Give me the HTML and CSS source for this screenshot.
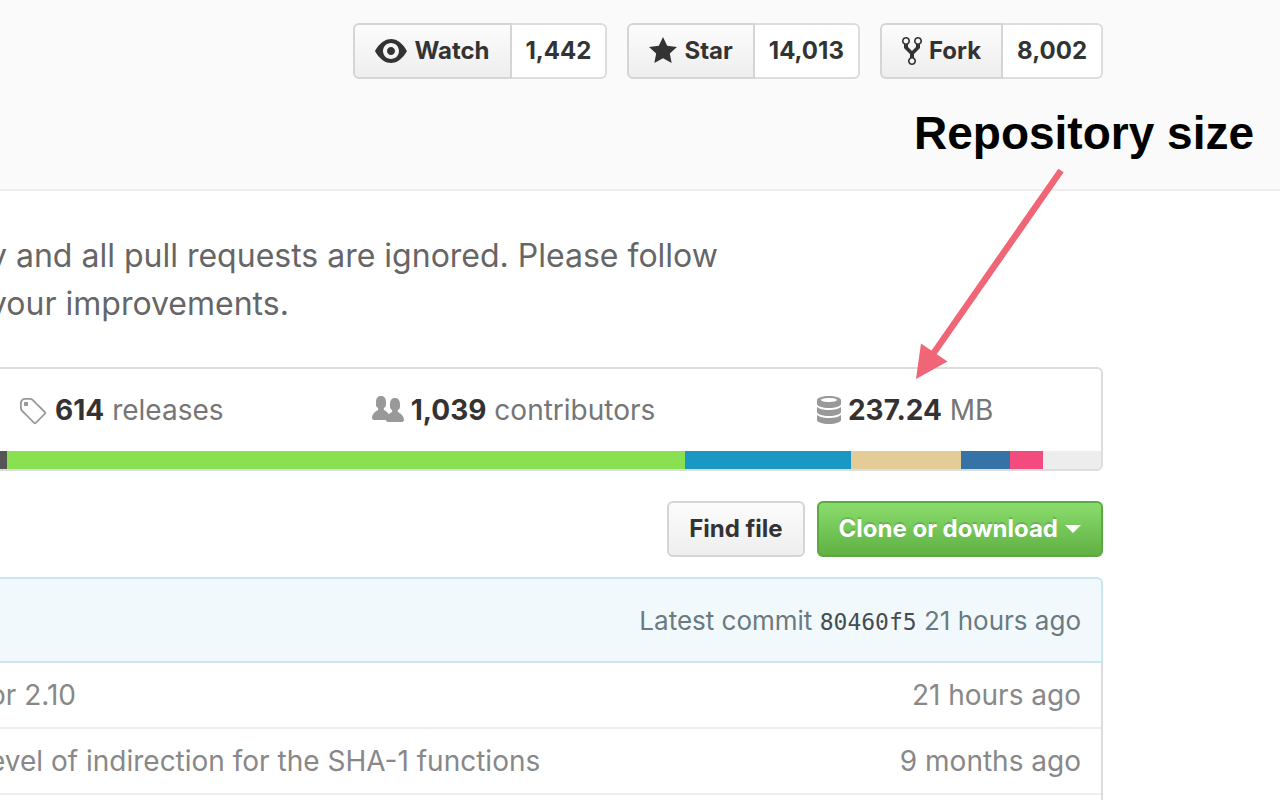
FILE: index.html
```html
<!DOCTYPE html>
<html lang="en">
<head>
    <meta charset="UTF-8">
    <meta name="viewport" content="width=device-width, initial-scale=1.0">
    <title>Repository size</title>
    <link rel="stylesheet" href="styles.css">
</head>
<body>
    <header class="repohead">
        <ul class="pagehead-actions">
            <li>
                <button type="button" class="btn btn-with-count">
                    <svg class="icon" width="32" height="32" viewBox="0 0 16 16" aria-hidden="true"><path fill-rule="evenodd" d="M8.06 2C3 2 0 8 0 8s3 6 8.06 6C13 14 16 8 16 8s-3-6-7.94-6zM8 12c-2.2 0-4-1.78-4-4 0-2.2 1.8-4 4-4 2.22 0 4 1.8 4 4 0 2.22-1.78 4-4 4zm2-4c0 1.11-.89 2-2 2-1.11 0-2-.89-2-2 0-1.11.89-2 2-2 1.11 0 2 .89 2 2z"/></svg>
                    Watch
                </button>
                <a class="social-count" href="#">1,442</a>
            </li>
            <li>
                <button type="button" class="btn btn-with-count">
                    <svg class="icon" width="28" height="32" viewBox="0 0 14 16" aria-hidden="true"><path d="M14 6l-4.9-.64L7 1 4.9 5.36 0 6l3.6 3.26L2.67 14 7 11.67 11.33 14l-.93-4.74z"/></svg>
                    Star
                </button>
                <a class="social-count" href="#">14,013</a>
            </li>
            <li>
                <button type="button" class="btn btn-with-count">
                    <svg class="icon" width="20" height="32" viewBox="0 0 10 16" aria-hidden="true"><path fill-rule="evenodd" d="M8 1a1.993 1.993 0 0 0-1 3.72V6L5 8 3 6V4.72A1.993 1.993 0 0 0 2 1a1.993 1.993 0 0 0-1 3.72V6.5l3 3v1.78A1.993 1.993 0 0 0 5 15a1.993 1.993 0 0 0 1-3.72V9.5l3-3V4.72A1.993 1.993 0 0 0 8 1zM2 4.2C1.34 4.2.8 3.65.8 3c0-.65.55-1.2 1.2-1.2.65 0 1.2.55 1.2 1.2 0 .65-.55 1.2-1.2 1.2zm3 10c-.66 0-1.2-.55-1.2-1.2 0-.65.55-1.2 1.2-1.2.65 0 1.2.55 1.2 1.2 0 .65-.55 1.2-1.2 1.2zm3-10c-.66 0-1.2-.55-1.2-1.2 0-.65.55-1.2 1.2-1.2.65 0 1.2.55 1.2 1.2 0 .65-.55 1.2-1.2 1.2z"/></svg>
                    Fork
                </button>
                <a class="social-count" href="#">8,002</a>
            </li>
        </ul>
    </header>

    <main class="repo">
        <p class="repo-description">y and all pull requests are ignored. Please follow<br>your improvements.</p>

        <section class="overall-summary">
            <ul class="numbers-summary">
                <li>
                    <a href="#">
                        <svg class="icon" width="28" height="32" viewBox="0 0 14 16" aria-hidden="true"><path fill-rule="evenodd" d="M6.73 2.73C6.26 2.26 5.6 2 4.94 2H2.5C1.13 2 0 3.13 0 4.5v2.44c0 .66.27 1.3.73 1.77l6.06 6.06c.39.39 1.02.39 1.41 0l4.59-4.59a.996.996 0 0 0 0-1.41L6.73 2.73zM1.38 8.09C1.09 7.8.92 7.38.92 6.94V4.5c0-.88.7-1.59 1.59-1.59h2.44c.42 0 .83.16 1.14.47l6.13 6.13-4.73 4.73-6.11-6.15zM2 4h2v2H2V4z"/></svg>
                        <span><strong>614</strong> releases</span>
                    </a>
                </li>
                <li>
                    <a href="#">
                        <svg class="icon" width="32" height="32" viewBox="0 0 16 16" aria-hidden="true"><path d="M16 12.999c0 .439-.45 1-1 1H7.995c-.539 0-.994-.447-.995-.999H1c-.54 0-1-.561-1-1 0-2.634 3-4 3-4s.229-.409 0-1c-.841-.621-1.058-.59-1-3 .058-2.419 1.367-3 2.5-3s2.442.58 2.5 3c.058 2.41-.159 2.379-1 3-.229.59 0 1 0 1s1.549.711 2.42 2.088C9.196 9.369 10 8.999 10 8.999s.229-.409 0-1c-.841-.62-1.058-.59-1-3 .058-2.419 1.367-3 2.5-3s2.437.581 2.495 3c.059 2.41-.158 2.38-1 3-.229.59 0 1 0 1s3.005 1.366 3.005 4z"/></svg>
                        <span><strong>1,039</strong> contributors</span>
                    </a>
                </li>
                <li>
                    <a href="#">
                        <svg class="icon" width="24" height="32" viewBox="0 0 12 16" aria-hidden="true"><path fill-rule="evenodd" d="M6 15c-3.31 0-6-.9-6-2v-2c0-.17.09-.34.21-.5.67.86 3 1.5 5.79 1.5s5.12-.64 5.79-1.5c.13.16.21.33.21.5v2c0 1.1-2.69 2-6 2zm0-4c-3.31 0-6-.9-6-2V7c0-.11.04-.21.09-.31.03-.06.07-.13.12-.19C.88 7.36 3.21 8 6 8s5.12-.64 5.79-1.5c.05.06.09.13.12.19.05.1.09.21.09.31v2c0 1.1-2.69 2-6 2zm0-4c-3.31 0-6-.9-6-2V3c0-1.1 2.69-2 6-2s6 .9 6 2v2c0 1.1-2.69 2-6 2zm0-5c-2.21 0-4 .45-4 1s1.79 1 4 1 4-.45 4-1-1.79-1-4-1z"/></svg>
                        <span><strong>237.24</strong> MB</span>
                    </a>
                </li>
            </ul>
            <div class="language-bar">
                <span class="lang-c" style="width: 6.9%"></span>
                <span class="lang-shell" style="width: 57.7%"></span>
                <span class="lang-perl" style="width: 14.1%"></span>
                <span class="lang-tcl" style="width: 9.4%"></span>
                <span class="lang-python" style="width: 4.2%"></span>
                <span class="lang-html" style="width: 2.8%"></span>
            </div>
        </section>

        <div class="file-navigation">
            <button type="button" class="btn">Find file</button>
            <button type="button" class="btn btn-primary">Clone or download <span class="dropdown-caret"></span></button>
        </div>

        <section class="file-list">
            <div class="commit-tease">
                <span>Latest commit <a class="commit-sha" href="#">80460f5</a> 21 hours ago</span>
            </div>
            <table class="files">
                <tbody>
                    <tr>
                        <td class="message">or 2.10</td>
                        <td class="age">21 hours ago</td>
                    </tr>
                    <tr>
                        <td class="message">evel of indirection for the SHA-1 functions</td>
                        <td class="age">9 months ago</td>
                    </tr>
                    <tr>
                        <td class="message"></td>
                        <td class="age"></td>
                    </tr>
                </tbody>
            </table>
        </section>
    </main>

    <!-- callout on top of the page -->
    <div class="callout">
        <p class="callout-label">Repository size</p>
        <svg class="callout-arrow" width="150" height="212" viewBox="0 0 150 212" aria-hidden="true">
            <path d="M146 2.500L18 186" fill="none" stroke="#f06677" stroke-width="6.500"/>
            <path d="M1 211L6 175.500L32.500 193.500Z" fill="#f06677"/>
        </svg>
    </div>
</body>
</html>
```

FILE: styles.css
```css
* {
    margin: 0;
    padding: 0;
    box-sizing: border-box;
}

body {
    font-family: Inter, "Liberation Sans", sans-serif;
    font-size: 28px;
    color: #333;
    background: #fff;
    height: 100vh;
    position: relative;
    overflow: hidden;
}

ul {
    list-style: none;
}

a {
    color: inherit;
    text-decoration: none;
}

.icon {
    display: block;
    flex: none;
    fill: currentColor;
}

/* header with social buttons */
.repohead {
    height: 191px;
    padding: 23px 177px 0 0;
    background: #fafafa;
    border-bottom: 2px solid #eee;
}

.pagehead-actions {
    display: flex;
    justify-content: flex-end;
    gap: 20px;
}

.pagehead-actions li {
    display: flex;
}

.btn {
    display: flex;
    align-items: center;
    gap: 7px;
    height: 56px;
    padding: 0 20px 1px;
    font-family: inherit;
    font-size: 24px;
    font-weight: 700;
    color: #333;
    white-space: nowrap;
    background: linear-gradient(#fcfcfc, #eee);
    border: 2px solid #d5d5d5;
    border-radius: 6px;
    cursor: pointer;
}

.btn-with-count {
    border-radius: 6px 0 0 6px;
}

.social-count {
    display: flex;
    align-items: center;
    height: 56px;
    padding: 0 14px 1px;
    font-size: 24px;
    font-weight: 700;
    background: #fff;
    border: 2px solid #ddd;
    border-left: 0;
    border-radius: 0 6px 6px 0;
}

.btn-primary {
    color: #fff;
    text-shadow: 0 -2px 0 rgba(0, 0, 0, 0.15);
    background: linear-gradient(#8add6d, #60b044);
    border-color: #5ca941;
}

.dropdown-caret {
    border: 8px solid transparent;
    border-top-color: #fff;
    border-bottom: 0;
}

/* the left side of the repo runs past the window edge */
.repo {
    margin: 0 177px 0 -76px;
}

.repo-description {
    padding: 41px 0 39px 65px;
    font-size: 32px;
    line-height: 48px;
    color: #666;
    white-space: nowrap;
}

.overall-summary {
    border: 2px solid #ddd;
    border-radius: 6px;
    overflow: hidden;
}

.numbers-summary {
    display: flex;
    color: #767676;
}

.numbers-summary li {
    flex: 1;
}

.numbers-summary a {
    display: flex;
    justify-content: center;
    align-items: center;
    gap: 7px;
    height: 82px;
    white-space: nowrap;
}

.numbers-summary .icon {
    color: #999;
}

.numbers-summary strong {
    font-weight: 700;
    color: #333;
}

.language-bar {
    display: flex;
    height: 18px;
    background: #ededed;
}

.lang-c { background: #555; }
.lang-shell { background: #89e051; }
.lang-perl { background: #1a97c2; }
.lang-tcl { background: #e4cc98; }
.lang-python { background: #3572a5; }
.lang-html { background: #f44b7f; }

.file-navigation {
    display: flex;
    justify-content: flex-end;
    gap: 12px;
    padding: 30px 0 20px;
}

/* latest commit and files */
.commit-tease {
    display: flex;
    justify-content: flex-end;
    align-items: center;
    height: 86px;
    padding: 0 20px;
    font-size: 26px;
    color: #6a7a80;
    background: #f2f9fc;
    border: 2px solid #c9e6f2;
    border-radius: 6px 6px 0 0;
}

.commit-sha {
    font-family: "DejaVu Sans Mono", monospace;
    font-size: 23px;
    color: #444d50;
}

.files {
    width: 100%;
    border-collapse: separate;
    border-spacing: 0;
    border-right: 2px solid #ddd;
    color: #888;
}

.files td {
    height: 66px;
    border-bottom: 2px solid #eee;
    white-space: nowrap;
}

.files .message {
    padding-left: 65px;
}

.files .age {
    padding-right: 20px;
    text-align: right;
}

/* callout */
.callout {
    position: absolute;
    top: 106px;
    right: 26px;
}

.callout-label {
    font-family: "Liberation Sans", sans-serif;
    font-size: 46px;
    font-weight: bold;
    line-height: 54px;
    color: #000;
}

.callout-arrow {
    position: absolute;
    top: 62px;
    right: 189px;
}
```
